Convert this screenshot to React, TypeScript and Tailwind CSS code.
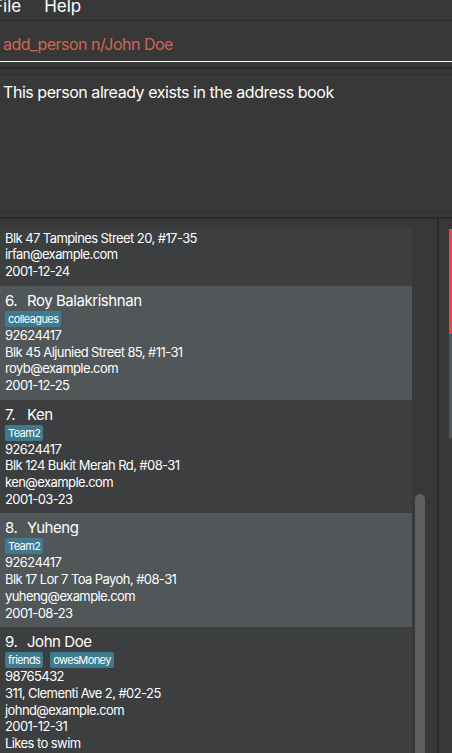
import React from "react";

type Person = {
  name: string;
  tags: string[];
  phone: string;
  address: string;
  email: string;
  birthday: string;
  remark?: string;
};

const people: Person[] = [
  {
    name: "Irfan Ibrahim",
    tags: ["classmates"],
    phone: "92492021",
    address: "Blk 47 Tampines Street 20, #17-35",
    email: "irfan@example.com",
    birthday: "2001-12-24",
  },
  {
    name: "Roy Balakrishnan",
    tags: ["colleagues"],
    phone: "92624417",
    address: "Blk 45 Aljunied Street 85, #11-31",
    email: "royb@example.com",
    birthday: "2001-12-25",
  },
  {
    name: "Ken",
    tags: ["Team2"],
    phone: "92624417",
    address: "Blk 124 Bukit Merah Rd, #08-31",
    email: "ken@example.com",
    birthday: "2001-03-23",
  },
  {
    name: "Yuheng",
    tags: ["Team2"],
    phone: "92624417",
    address: "Blk 17 Lor 7 Toa Payoh, #08-31",
    email: "yuheng@example.com",
    birthday: "2001-08-23",
  },
  {
    name: "John Doe",
    tags: ["friends", "owesMoney"],
    phone: "98765432",
    address: "311, Clementi Ave 2, #02-25",
    email: "johnd@example.com",
    birthday: "2001-12-31",
    remark: "Likes to swim",
  },
];

const PersonCard = ({ p, index }: { p: Person; index: number }) => {
  const odd = index % 2 === 1;
  return (
    <div className={`shrink-0 px-[5px] pt-[5px] pb-[6px] ${odd ? "bg-[#515658]" : "bg-[#3c3e3f]"}`}>
      {/* name row */}
      <div className="flex h-[20px] items-center text-[15px] leading-[20px] tracking-[-0.45px]">
        <span className="w-[22px]">{index + 5}.</span>
        <span>{p.name}</span>
      </div>
      {/* tags */}
      <div className="flex h-[16px] gap-[7px]">
        {p.tags.map((t) => (
          <span
            key={t}
            className="h-[16px] rounded-[2px] bg-[#3e7b91] pl-[3px] pr-[3px] text-[11px] leading-[16px] tracking-[-0.6px]"
          >
            {t}
          </span>
        ))}
      </div>
      <div className="text-[13px] leading-[16.7px] tracking-[-0.58px]">
        <div>{p.phone}</div>
        <div>{p.address}</div>
        <div>{p.email}</div>
        <div>{p.birthday}</div>
        {p.remark && <div>{p.remark}</div>}
      </div>
    </div>
  );
};

export default function App() {
  return (
    <div
      className="flex h-[753px] w-[452px] flex-col overflow-hidden bg-[#383838] text-white"
      style={{ fontFamily: "Inter, 'Noto Sans', sans-serif" }}
    >
      {/* menu bar */}
      <div className="flex h-[21px] shrink-0 gap-[23px] overflow-hidden border-b border-[#2d2d2d] text-[17px] leading-[20px]">
        <span className="-ml-[7px] -mt-[4px]">File</span>
        <span className="-mt-[4px]">Help</span>
      </div>

      {/* command box */}
      <div className="h-[41px] shrink-0 border-b border-white px-[3px] pt-[12px] text-[16px] leading-[22px] tracking-[-0.5px] text-[#d06651]">
        add_person n/John Doe
      </div>
      <div className="h-[5px] shrink-0" />
      <div className="h-[2px] shrink-0 bg-[#2b2b2b]" />
      <div className="h-[5px] shrink-0" />
      <div className="h-[1px] shrink-0 bg-[#2e2e2e]" />

      {/* result display */}
      <div className="h-[137px] shrink-0 border-b border-[#2e2e2e] px-[3px] pt-[6px] text-[16px] leading-[22px] tracking-[-0.45px]">
        This person already exists in the address book
      </div>
      <div className="h-[5px] shrink-0" />
      <div className="h-[2px] shrink-0 bg-[#2b2b2b]" />

      {/* list area */}
      <div className="flex min-h-0 flex-1">
        <div className="flex w-[437px] flex-col pt-[10px]">
          <div className="flex min-h-0 flex-1">
            <div className="flex w-[412px] flex-col overflow-hidden">
              <div className="-mt-[57px] flex flex-col">
                {people.map((p, i) => (
                  <PersonCard key={p.name} p={p} index={i} />
                ))}
              </div>
            </div>
            {/* scrollbar */}
            <div className="flex w-[25px] flex-col pl-[3px] pt-[265px]">
              <div className="w-[10px] flex-1 rounded-t-[5px] bg-[#5f5f5f]" />
            </div>
          </div>
        </div>
        <div className="w-[2px] bg-[#2b2b2b]" />
        <div className="flex w-[13px] justify-end pt-[10px]">
          <div className="flex w-[3px] flex-col">
            <div className="h-[105px] bg-[#f2434a]" />
            <div className="h-[104px] bg-[#50565a]" />
            <div className="flex-1 bg-[#3a3a3a]" />
          </div>
        </div>
      </div>
    </div>
  );
}
